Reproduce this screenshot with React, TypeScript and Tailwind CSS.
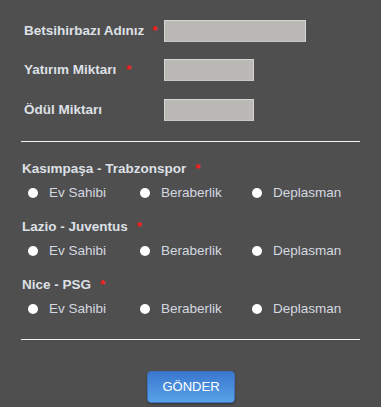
import React, { useState } from 'react';

const matches = [
  { id: 'm1', title: 'Kasımpaşa - Trabzonspor' },
  { id: 'm2', title: 'Lazio - Juventus' },
  { id: 'm3', title: 'Nice - PSG' },
];

const options = ['Ev Sahibi', 'Beraberlik', 'Deplasman'];

const App: React.FC = () => {
  const [picks, setPicks] = useState<Record<string, string>>({});

  return (
    <div className="w-[381px] h-[407px] bg-[#4f4f4f] overflow-hidden font-['Liberation_Sans',Arial,sans-serif] text-[#dde0e6]">
      {/* Top fields */}
      <div className="pt-[20px] pl-[24px] flex flex-col">
        <div className="flex items-center h-[22px]">
          <div className="w-[140px] text-[13.5px] font-bold leading-none">
            Betsihirbazı Adınız<span className="text-[#ff1a1a] ml-[8px]">*</span>
          </div>
          <input className="w-[142px] h-[22px] bg-[#bbb9b6] border border-[#d6d5d2] border-b-[#c8c7c4] outline-none" />
        </div>
        <div className="flex items-center h-[22px] mt-[17px]">
          <div className="w-[140px] text-[13.5px] font-bold leading-none">
            Yatırım Miktarı<span className="text-[#ff1a1a] ml-[10px]">*</span>
          </div>
          <input className="w-[90px] h-[22px] bg-[#bbb9b6] border border-[#d6d5d2] border-b-[#c8c7c4] outline-none" />
        </div>
        <div className="flex items-center h-[22px] mt-[18px]">
          <div className="w-[140px] text-[13.5px] font-bold leading-none">Ödül Miktarı</div>
          <input className="w-[90px] h-[22px] bg-[#bbb9b6] border border-[#d6d5d2] border-b-[#c8c7c4] outline-none" />
        </div>
      </div>

      <div className="ml-[21px] w-[339px] h-px bg-[#f2f2f2] mt-[20px]" />

      {/* Matches */}
      <div className="pl-[22px] pt-[17px] flex flex-col gap-[14px]">
        {matches.map((m) => (
          <div key={m.id} className="flex flex-col gap-[4px]">
            <div className="h-[20px] flex items-center text-[13.5px] font-bold">
              {m.title}
              <span className="text-[#ff1a1a] ml-[9px]">*</span>
            </div>
            <div className="flex h-[20px] items-center pl-[6px]">
              {options.map((o) => (
                <label key={o} className="w-[112px] flex items-center cursor-pointer" onClick={() => setPicks({ ...picks, [m.id]: o })}>
                  <span className="w-[10px] h-[10px] rounded-full bg-white flex items-center justify-center">
                    {picks[m.id] === o && <span className="w-[4px] h-[4px] rounded-full bg-[#333]" />}
                  </span>
                  <span className="ml-[11px] text-[13.5px] text-[#d4d8e0]">{o}</span>
                </label>
              ))}
            </div>
          </div>
        ))}
      </div>

      <div className="ml-[21px] w-[339px] h-px bg-[#f2f2f2] mt-[20px]" />

      <div className="flex justify-center pt-[31px]">
        <button className="ml-[1px] w-[88px] h-[32px] rounded-[4px] border border-[#3d73bd] bg-gradient-to-b from-[#3b77cf] to-[#58a2e8] text-white text-[13px] shadow-[0_1px_2px_rgba(0,0,0,0.35)]">
          GÖNDER
        </button>
      </div>
    </div>
  );
};

export default App;
